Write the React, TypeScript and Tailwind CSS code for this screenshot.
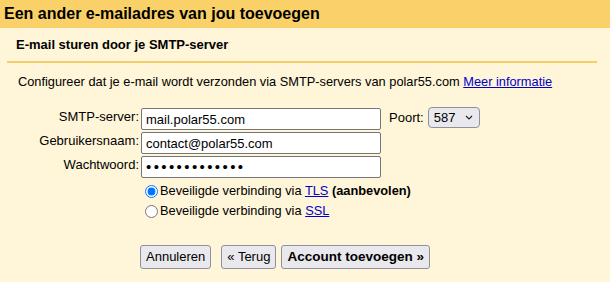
import React from 'react';

const font = { fontFamily: '"Liberation Sans", Arial, sans-serif' };

function Field({ label, value, secret = false }: { label: string; value: string; secret?: boolean }) {
  return (
    <>
      <label className="text-right text-[13px] leading-[16px] pt-[1px] text-black">{label}</label>
      <input
        type="text"
        readOnly
        value={value}
        className={
          secret
            ? 'w-[240px] h-[22px] px-[4px] bg-white border border-[#767676] rounded-[2px] text-[15px] tracking-[2.4px] text-black outline-none'
            : 'w-[240px] h-[22px] px-[4px] bg-white border border-[#767676] rounded-[2px] text-[13px] text-black outline-none'
        }
        style={font}
      />
    </>
  );
}

export default function App() {
  return (
    <div className="w-[610px] h-[282px] bg-[#fff5d8] text-black overflow-hidden" style={font}>
      {/* Title bar */}
      <div className="h-[28px] bg-[#f9d168] pl-[4px] flex items-center">
        <h1 className="text-[16px] font-bold leading-none">Een ander e-mailadres van jou toevoegen</h1>
      </div>

      {/* Step heading */}
      <div className="mx-[7px] w-[590px] pt-[9px] pb-[8px] border-b-2 border-[#f4ce6b]">
        <h2 className="pl-[9px] text-[13px] font-bold leading-[16px]">E-mail sturen door je SMTP-server</h2>
      </div>

      <div className="pl-[18px] pt-[11px]">
        <p className="text-[12.8px] leading-[16px]">
          Configureer dat je e-mail wordt verzonden via SMTP-servers van polar55.com{' '}
          <a className="text-[#0000cc] underline">Meer informatie</a>
        </p>

        <div className="mt-[18px] -ml-[18px] flex items-start">
          <div className="grid grid-cols-[139px_auto] gap-x-[2px] gap-y-[2px] items-start">
            <Field label="SMTP-server:" value="mail.polar55.com" />
            <Field label="Gebruikersnaam:" value="contact@polar55.com" />
            <Field label="Wachtwoord:" value="•••••••••••••" secret />
          </div>
          <div className="ml-[8px] -mt-[1px] flex items-center gap-[4px]">
            <span className="text-[13px]">Poort:</span>
            <div className="h-[21px] w-[52px] bg-[#e9e9ed] border border-[#8f8f9d] rounded-[4px] flex items-center justify-between pl-[5px] pr-[6px] text-[13px]">
              <span>587</span>
              <svg width="8" height="5" viewBox="0 0 8 5" fill="none">
                <path d="M1 1l3 3 3-3" stroke="#222" strokeWidth="1.1" />
              </svg>
            </div>
          </div>
        </div>

        <div className="ml-[127px] mt-[5px] flex flex-col gap-[4px] text-[12.8px] leading-[16px]">
          <label className="flex items-center gap-[2px]">
            <input type="radio" name="sec" defaultChecked className="m-0 w-[13px] h-[13px] accent-[#0075ff]" />
            <span>
              Beveiligde verbinding via <a className="text-[#0000cc] underline">TLS</a> <b>(aanbevolen)</b>
            </span>
          </label>
          <label className="flex items-center gap-[2px]">
            <input type="radio" name="sec" className="m-0 w-[13px] h-[13px]" />
            <span>
              Beveiligde verbinding via <a className="text-[#0000cc] underline">SSL</a>
            </span>
          </label>
        </div>

        <div className="ml-[122px] mt-[26px] flex items-center text-[13px]">
          <button className="h-[24px] px-[5px] bg-[#e9e9ed] border border-[#8f8f9d] rounded-[3px]" style={font}>
            Annuleren
          </button>
          <button className="ml-[10px] h-[24px] px-[5px] bg-[#e9e9ed] border border-[#8f8f9d] rounded-[3px]" style={font}>
            « Terug
          </button>
          <button className="ml-[5px] h-[24px] px-[5px] bg-[#e9e9ed] border border-[#8f8f9d] rounded-[3px] font-bold text-[13.5px]" style={font}>
            Account toevoegen »
          </button>
        </div>
      </div>
    </div>
  );
}
